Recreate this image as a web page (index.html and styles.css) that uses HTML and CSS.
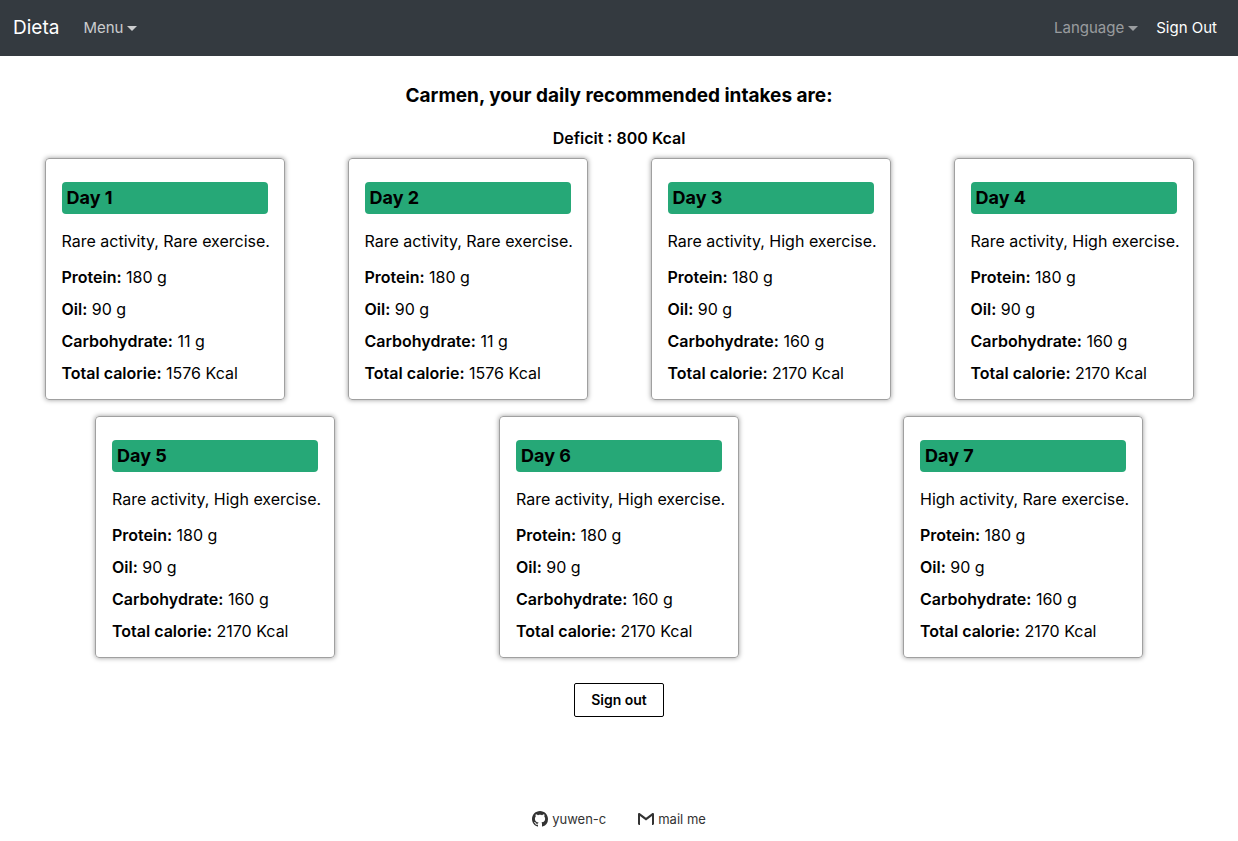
FILE: index.html
```html
<!DOCTYPE html>
<html lang="en">
<head>
<meta charset="utf-8">
<meta name="viewport" content="width=device-width, initial-scale=1">
<title>Dieta</title>
<link rel="stylesheet" href="styles.css">
</head>
<body>
<nav class="navbar">
  <a class="brand" href="#">Dieta</a>
  <button class="nav-item menu" type="button">Menu<span class="caret"></span></button>
  <button class="nav-item language" type="button">Language<span class="caret"></span></button>
  <a class="sign-out-link" href="#">Sign Out</a>
</nav>
<main class="content">
  <h1 class="title">Carmen, your daily recommended intakes are:</h1>
  <p class="deficit">Deficit : 800 Kcal</p>
  <div class="days">
    <section class="card">
      <h2 class="day">Day 1</h2>
      <p class="activity">Rare activity, Rare exercise.</p>
      <p class="fact"><b>Protein:</b> 180 g</p>
      <p class="fact"><b>Oil:</b> 90 g</p>
      <p class="fact"><b>Carbohydrate:</b> 11 g</p>
      <p class="fact"><b>Total calorie:</b> 1576 Kcal</p>
    </section>
    <section class="card">
      <h2 class="day">Day 2</h2>
      <p class="activity">Rare activity, Rare exercise.</p>
      <p class="fact"><b>Protein:</b> 180 g</p>
      <p class="fact"><b>Oil:</b> 90 g</p>
      <p class="fact"><b>Carbohydrate:</b> 11 g</p>
      <p class="fact"><b>Total calorie:</b> 1576 Kcal</p>
    </section>
    <section class="card">
      <h2 class="day">Day 3</h2>
      <p class="activity">Rare activity, High exercise.</p>
      <p class="fact"><b>Protein:</b> 180 g</p>
      <p class="fact"><b>Oil:</b> 90 g</p>
      <p class="fact"><b>Carbohydrate:</b> 160 g</p>
      <p class="fact"><b>Total calorie:</b> 2170 Kcal</p>
    </section>
    <section class="card">
      <h2 class="day">Day 4</h2>
      <p class="activity">Rare activity, High exercise.</p>
      <p class="fact"><b>Protein:</b> 180 g</p>
      <p class="fact"><b>Oil:</b> 90 g</p>
      <p class="fact"><b>Carbohydrate:</b> 160 g</p>
      <p class="fact"><b>Total calorie:</b> 2170 Kcal</p>
    </section>
    <section class="card">
      <h2 class="day">Day 5</h2>
      <p class="activity">Rare activity, High exercise.</p>
      <p class="fact"><b>Protein:</b> 180 g</p>
      <p class="fact"><b>Oil:</b> 90 g</p>
      <p class="fact"><b>Carbohydrate:</b> 160 g</p>
      <p class="fact"><b>Total calorie:</b> 2170 Kcal</p>
    </section>
    <section class="card">
      <h2 class="day">Day 6</h2>
      <p class="activity">Rare activity, High exercise.</p>
      <p class="fact"><b>Protein:</b> 180 g</p>
      <p class="fact"><b>Oil:</b> 90 g</p>
      <p class="fact"><b>Carbohydrate:</b> 160 g</p>
      <p class="fact"><b>Total calorie:</b> 2170 Kcal</p>
    </section>
    <section class="card">
      <h2 class="day">Day 7</h2>
      <p class="activity">High activity, Rare exercise.</p>
      <p class="fact"><b>Protein:</b> 180 g</p>
      <p class="fact"><b>Oil:</b> 90 g</p>
      <p class="fact"><b>Carbohydrate:</b> 160 g</p>
      <p class="fact"><b>Total calorie:</b> 2170 Kcal</p>
    </section>
  </div>
  <button class="sign-out" type="button">Sign out</button>
</main>
<footer class="footer">
  <a class="contact" href="#"><svg class="icon" viewBox="0 0 16 16" aria-hidden="true"><path fill="currentColor" fill-rule="evenodd" d="M8 0C3.58 0 0 3.58 0 8c0 3.54 2.29 6.53 5.47 7.59.4.07.55-.17.55-.38 0-.19-.01-.82-.01-1.49-2.01.37-2.53-.49-2.69-.94-.09-.23-.48-.94-.82-1.13-.28-.15-.68-.52-.01-.53.63-.01 1.08.58 1.23.82.72 1.21 1.87.87 2.33.66.07-.52.28-.87.51-1.07-1.78-.2-3.64-.89-3.64-3.95 0-.87.31-1.59.82-2.15-.08-.2-.36-1.02.08-2.12 0 0 .67-.21 2.2.82.64-.18 1.32-.27 2-.27s1.36.09 2 .27c1.53-1.04 2.2-.82 2.2-.82.44 1.1.16 1.92.08 2.12.51.56.82 1.27.82 2.15 0 3.07-1.87 3.75-3.65 3.95.29.25.54.73.54 1.48 0 1.07-.01 1.93-.01 2.2 0 .21.15.46.55.38A8.01 8.01 0 0 0 16 8c0-4.42-3.58-8-8-8z"/></svg>yuwen-c</a>
  <a class="contact" href="#"><svg class="icon" viewBox="0 0 16 16" aria-hidden="true"><path fill="currentColor" d="M0 3.200C0 2.500.5 2 1.200 2h.4L8 6.800 14.400 2h.4c.7 0 1.200.5 1.200 1.200v9.600c0 .7-.5 1.200-1.200 1.200H14V5L8 9.400 2 5v9h-.8C.5 14 0 13.500 0 12.800z"/></svg>mail me</a>
</footer>
</body>
</html>
```
FILE: styles.css
```css
* {
  box-sizing: border-box;
}

body {
  display: flex;
  flex-direction: column;
  min-height: 100vh;
  margin: 0;
  background: #fff;
  color: #000;
  font: 16px/24px Inter, "Liberation Sans", sans-serif;
}

h1,
h2,
p {
  margin: 0;
}

a {
  color: inherit;
  text-decoration: none;
}

button {
  margin: 0;
  font: inherit;
  cursor: pointer;
}

.navbar {
  display: flex;
  align-items: center;
  height: 56px;
  padding: 0 21px 0 13px;
  background: #343a40;
  font-size: 15px;
}

.brand {
  margin-right: 24px;
  color: #fff;
  font-size: 19px;
}

.nav-item {
  display: flex;
  align-items: center;
  gap: 4px;
  padding: 0;
  border: 0;
  background: none;
}

.menu {
  color: rgba(255, 255, 255, 0.75);
}

.language {
  margin: 0 18px 0 auto;
  color: rgba(255, 255, 255, 0.5);
}

.caret {
  border: 5px solid transparent;
  border-top-color: currentColor;
  border-bottom: 0;
}

.sign-out-link {
  color: #fff;
}

.content {
  display: flex;
  flex-direction: column;
  align-items: center;
  padding: 28px 13px 0;
}

.title {
  font-size: 19px;
  font-weight: 700;
  line-height: 24px;
}

.deficit {
  margin: 18px 0 8px;
  font-weight: 600;
}

.days {
  display: flex;
  flex-wrap: wrap;
  justify-content: space-around;
  row-gap: 16px;
  width: 100%;
}

.card {
  width: 240px;
  margin: 0 8px;
  padding: 23px 16px 14px;
  border: 1px solid #a0a0a0;
  border-radius: 4px;
  box-shadow: 0 0 5px rgba(0, 0, 0, 0.4);
}

.day {
  padding: 0 5px;
  border-radius: 4px;
  background: #26a877;
  font-size: 18px;
  font-weight: 700;
  line-height: 32px;
}

.activity {
  margin: 15px 0 12px;
  white-space: nowrap;
}

.fact + .fact {
  margin-top: 8px;
}

.fact b {
  font-weight: 600;
}

.sign-out {
  height: 34px;
  margin-top: 25px;
  padding: 0 16px;
  border: 1px solid #000;
  border-radius: 2px;
  background: #fff;
  color: #000;
  font-size: 14px;
  font-weight: 600;
}

.footer {
  display: flex;
  justify-content: center;
  gap: 32px;
  margin-top: auto;
  padding: 24px 0 10px;
  color: #333;
  font-size: 13px;
}

.contact {
  display: flex;
  align-items: center;
  gap: 4px;
}

.icon {
  width: 16px;
  height: 16px;
}
```
